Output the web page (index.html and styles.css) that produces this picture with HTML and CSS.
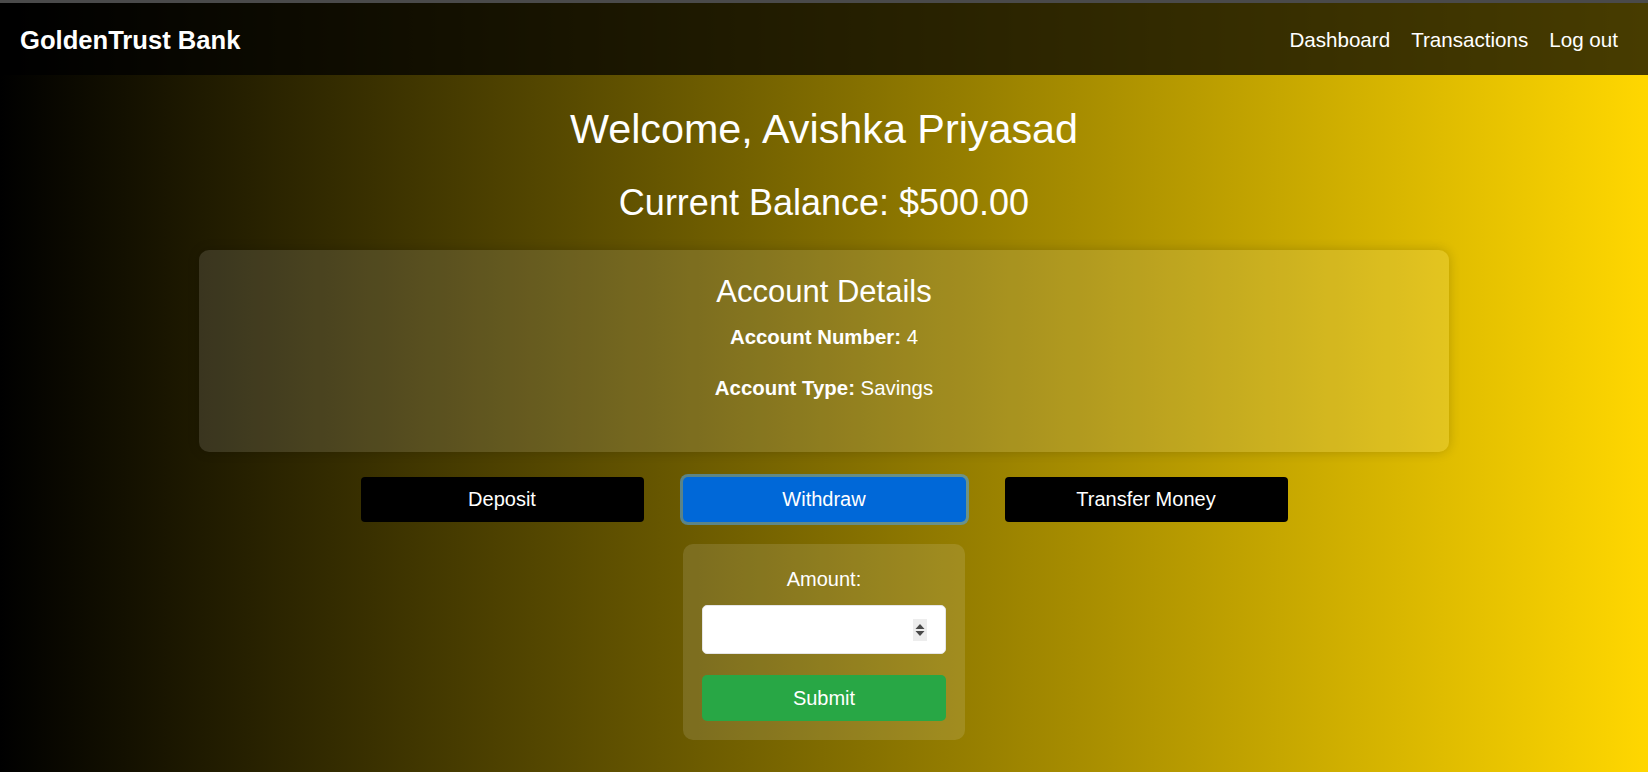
FILE: index.html
```html
<!DOCTYPE html>
<html lang="en">
<head>
<meta charset="utf-8">
<title>GoldenTrust Bank - Dashboard</title>
<link rel="stylesheet" href="styles.css">
</head>
<body>
<div class="topstrip"></div>
<nav class="navbar">
  <div class="brand">GoldenTrust Bank</div>
  <div class="links">
    <a href="#">Dashboard</a>
    <a href="#">Transactions</a>
    <a href="#">Log out</a>
  </div>
</nav>
<main class="main">
  <h1 class="welcome">Welcome, Avishka Priyasad</h1>
  <h2 class="balance">Current Balance: $500.00</h2>
  <section class="card">
    <h3 class="card-title">Account Details</h3>
    <p class="detail"><strong>Account Number:</strong> 4</p>
    <p class="detail"><strong>Account Type:</strong> Savings</p>
  </section>
  <div class="actions">
    <button class="btn">Deposit</button>
    <button class="btn btn-active">Withdraw</button>
    <button class="btn">Transfer Money</button>
  </div>
  <form class="panel">
    <label class="label" for="amount">Amount:</label>
    <div class="field">
      <input class="amount" id="amount" type="number">
      <span class="spin" aria-hidden="true">
        <svg width="14" height="22" viewBox="0 0 14 22">
          <path d="M7 5 L11.5 10 L2.5 10 Z" fill="#4a4a4a"/>
          <path d="M7 17 L11.5 12 L2.5 12 Z" fill="#4a4a4a"/>
        </svg>
      </span>
    </div>
    <button class="submit" type="button">Submit</button>
  </form>
</main>
</body>
</html>
```
FILE: styles.css
```css
html, body {
  margin: 0;
  padding: 0;
}
body {
  min-height: 772px;
  background: linear-gradient(to right, #000000, #ffd700);
  font-family: "Liberation Sans", Arial, sans-serif;
  color: #ffffff;
}
.topstrip {
  height: 3px;
  background: #4a4a4a;
}
.navbar {
  height: 72px;
  box-sizing: border-box;
  padding: 2px 30px 0 20px;
  display: flex;
  align-items: center;
  justify-content: space-between;
  background: rgba(0, 0, 0, 0.72);
}
.brand {
  font-size: 25.6px;
  font-weight: bold;
}
.links {
  display: flex;
  gap: 21px;
}
.links a {
  color: #ffffff;
  text-decoration: none;
  font-size: 20.6px;
}
.main {
  display: flex;
  flex-direction: column;
  align-items: center;
  padding: 0 199px;
}
.welcome {
  margin: 30px 0 0;
  font-size: 41.3px;
  line-height: 48px;
  font-weight: normal;
}
.balance {
  margin: 28px 0 0;
  font-size: 36px;
  line-height: 43px;
  font-weight: normal;
}
.card {
  margin-top: 26px;
  align-self: stretch;
  box-sizing: border-box;
  height: 202px;
  padding: 25px 20px 0;
  background: rgba(255, 255, 255, 0.12);
  border-radius: 10px;
  box-shadow: 0 0 12px rgba(0, 0, 0, 0.18);
  text-align: center;
}
.card-title {
  margin: 0;
  font-size: 31px;
  line-height: 34px;
  font-weight: normal;
}
.detail {
  margin: 16px 0 0;
  font-size: 20.4px;
  line-height: 24px;
}
.detail + .detail {
  margin-top: 27px;
}
.actions {
  margin-top: 25px;
  display: flex;
  justify-content: center;
  gap: 39px;
}
.btn {
  width: 283px;
  height: 45px;
  border: 0;
  border-radius: 4px;
  background: #000000;
  color: #ffffff;
  font-family: "Liberation Sans", Arial, sans-serif;
  font-size: 20px;
  cursor: pointer;
}
.btn-active {
  background: #0068d8;
  border-radius: 5px;
  box-shadow: 0 0 0 3px rgba(80, 160, 225, 0.6);
}
.panel {
  margin-top: 22px;
  width: 282px;
  box-sizing: border-box;
  padding: 23px 19px 19px;
  background: rgba(255, 255, 255, 0.12);
  border-radius: 10px;
  display: flex;
  flex-direction: column;
  align-items: stretch;
}
.label {
  text-align: center;
  font-size: 20px;
  line-height: 24px;
}
.field {
  position: relative;
  margin-top: 14px;
}
.amount {
  display: block;
  width: 100%;
  min-width: 0;
  height: 49px;
  box-sizing: border-box;
  border: 1px solid #e6e6e6;
  border-radius: 5px;
  background: #ffffff;
  padding: 0 12px;
  font-size: 18px;
  font-family: "Liberation Sans", Arial, sans-serif;
}
.amount::-webkit-inner-spin-button,
.amount::-webkit-outer-spin-button {
  -webkit-appearance: none;
  margin: 0;
}
.spin {
  position: absolute;
  right: 19px;
  top: 14px;
  width: 14px;
  height: 22px;
  background: #ededed;
  display: block;
}
.spin svg {
  display: block;
}
.submit {
  margin-top: 21px;
  height: 46px;
  border: 0;
  border-radius: 5px;
  background: #28a745;
  color: #ffffff;
  font-family: "Liberation Sans", Arial, sans-serif;
  font-size: 20px;
}
```
